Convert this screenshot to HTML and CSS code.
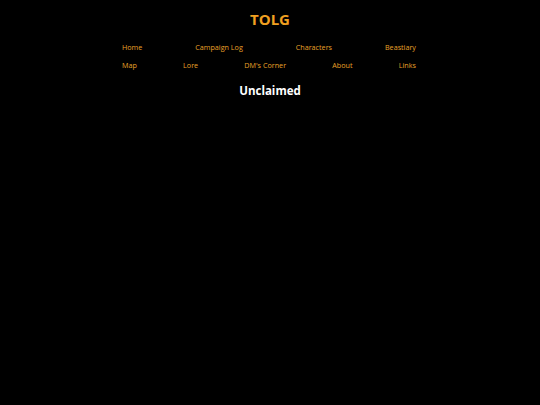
FILE: index.html
```html
<!DOCTYPE html>
<html><head><meta charset="utf-8"><title>TOLG</title><link rel="stylesheet" href="styles.css"></head>
<body>
<header class="site-header">
  <h1 class="site-title">TOLG</h1>
  <nav class="site-nav">
    <div class="nav-row">
      <a href="#">Home</a>
      <a href="#">Campaign Log</a>
      <a href="#">Characters</a>
      <a href="#">Beastiary</a>
    </div>
    <div class="nav-row">
      <a href="#">Map</a>
      <a href="#">Lore</a>
      <a href="#">DM's Corner</a>
      <a href="#">About</a>
      <a href="#">Links</a>
    </div>
  </nav>
</header>
<main class="content">
  <h2 class="page-title">Unclaimed</h2>
</main>
</body></html>
```
FILE: styles.css
```css
html,body{background:#000;}
body{margin:0;padding:8px;color:#fff;font-family:"Open Sans","Noto Sans",sans-serif;}
.site-header{display:flex;flex-direction:column;align-items:center;}
.site-title{margin:0;padding-top:1px;font-size:15px;line-height:20px;font-weight:bold;color:#f0a020;}
.site-nav{width:294px;margin:13px 2px 0 0;display:flex;flex-direction:column;gap:8px;}
.nav-row{display:flex;justify-content:space-between;font-size:7.2px;line-height:10px;}
.nav-row a{color:#e8a028;text-decoration:none;}
.content{text-align:center;}
.page-title{margin:13px 0 0;font-size:11.5px;line-height:16px;font-weight:bold;color:#fff;}
```
